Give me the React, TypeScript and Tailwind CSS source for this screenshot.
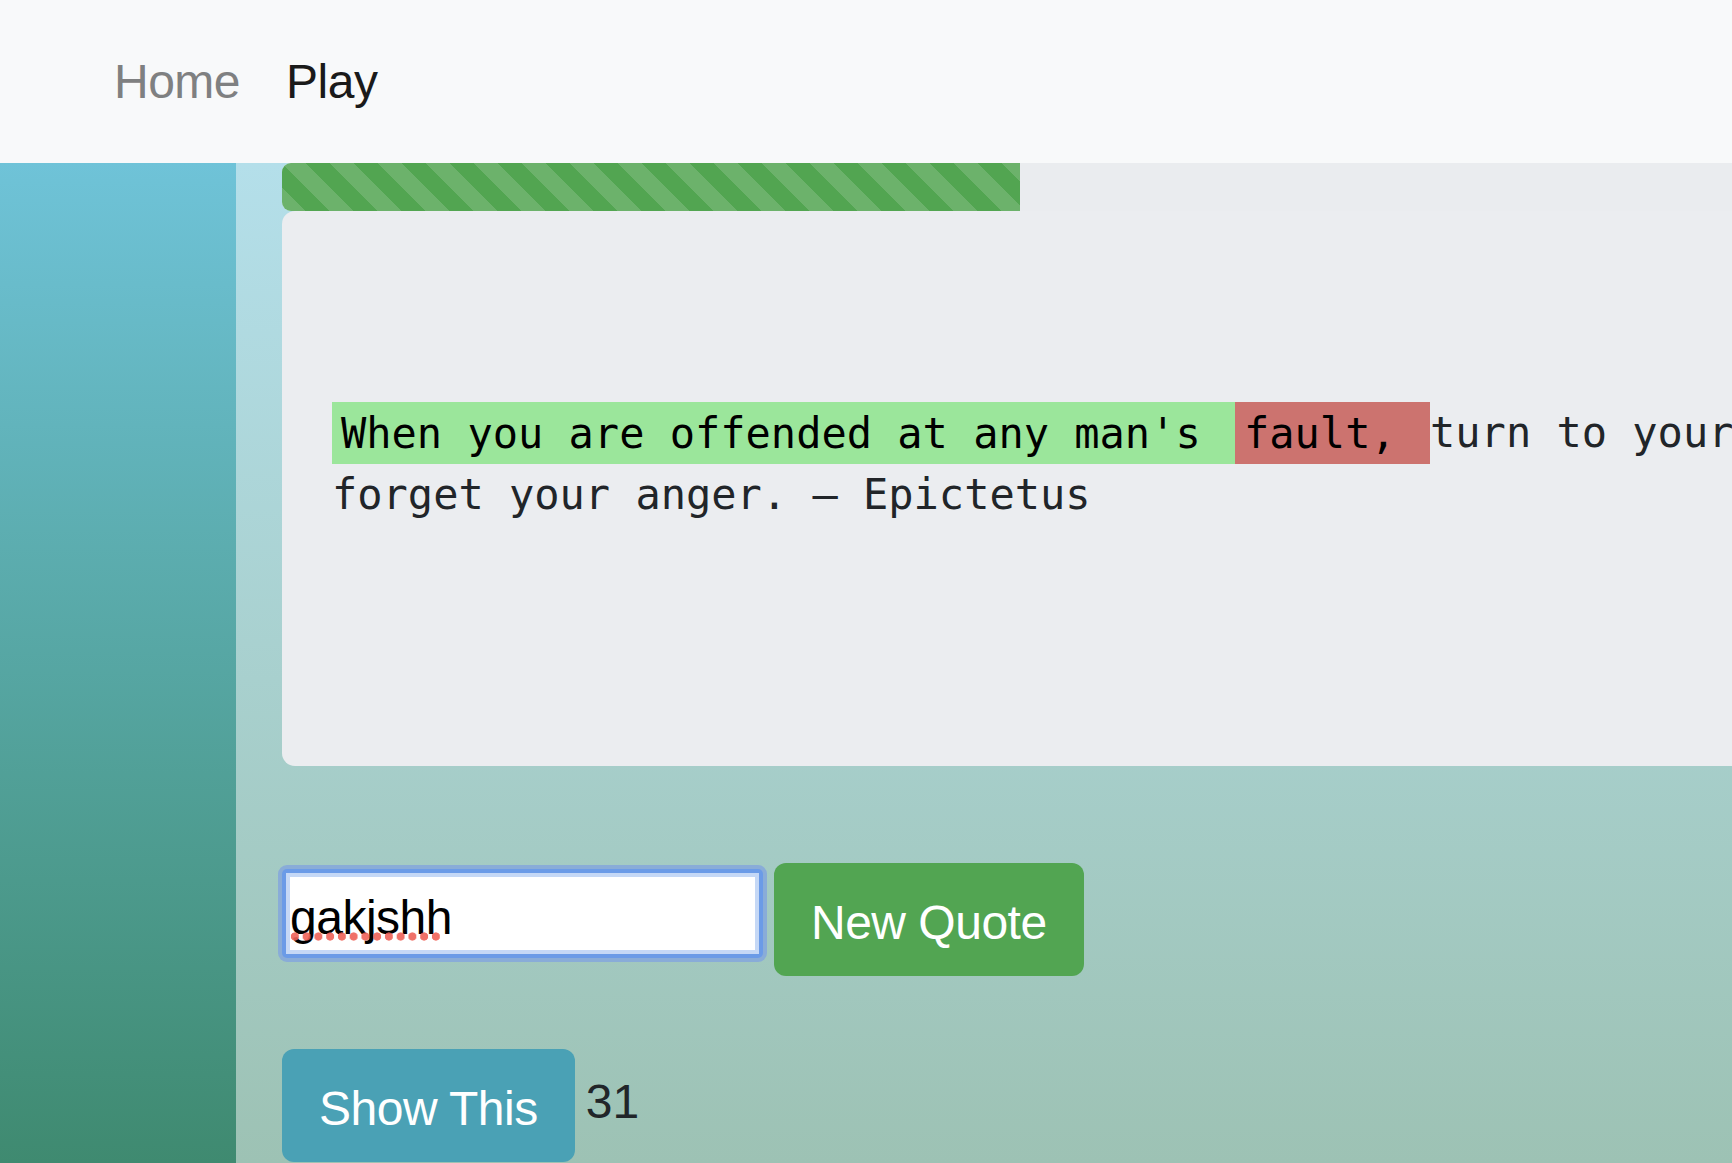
import React from "react";

export default function App() {
  return (
    <div className="w-[1732px] h-[1163px] overflow-hidden flex flex-col font-['Liberation_Sans',Arial,sans-serif]">
      <nav className="h-[163px] shrink-0 bg-[#f8f9fa] flex items-start pt-[46px] pl-[114px] gap-[46px] text-[48px] leading-[72px] tracking-[-0.5px]">
        <a className="text-[#7f8081]">Home</a>
        <a className="text-[#1a1a1a]">Play</a>
      </nav>
      <div className="flex-1 flex min-h-0">
        <aside className="w-[236px] shrink-0 bg-linear-to-b from-[#6fc3d8] to-[#3f8a70]" />
        <main className="flex-1 min-w-0 overflow-hidden bg-linear-to-b from-[#b4dfea] to-[#9dc2b4] pl-[46px]">
          <div className="w-[2700px] h-[48px] bg-[#eaecef] rounded-l-[9px] overflow-hidden flex">
            <div className="w-[738px] h-full bg-[#52a551] bg-[linear-gradient(45deg,rgba(255,255,255,.15)_25%,transparent_25%,transparent_50%,rgba(255,255,255,.15)_50%,rgba(255,255,255,.15)_75%,transparent_75%,transparent)] bg-[length:48px_48px]" />
          </div>
          <div className="w-[2700px] h-[555px] bg-[#ebedf0] rounded-[13px] pt-[191px] pl-[50px] font-['DejaVu_Sans_Mono',Menlo,monospace] text-[42px] leading-[62px] text-[#212529] whitespace-pre">
            <div>
              <span className="bg-[#9be69b] text-black px-[9px] py-[6.5px]">When you are offended at any man's </span>
              <span className="bg-[#cc736f] text-black px-[9px] py-[6.5px]">fault, </span>
              <span>turn to yourself and study your own failings. Then you will</span>
            </div>
            <div>forget your anger. – Epictetus</div>
          </div>
          <div className="mt-[97px] -ml-[4px] flex items-start gap-[7px]">
            <div className="mt-[2px] w-[489px] h-[97px] rounded-[9px] bg-[#89acd8] p-[4px]">
              <div className="rounded-[5px] bg-[#6b9be7] p-[4px]">
                <div className="bg-[#c5d8f6] p-[4px]">
                  <div className="relative h-[73px] bg-white">
                    <input
                      readOnly
                      value="gakjshh"
                      className="box-border block w-full h-[73px] pt-[7px] bg-white text-black text-[48px] tracking-[-0.5px] outline-none border-0 font-['Liberation_Sans',Arial,sans-serif]"
                    />
                    <span className="absolute -left-[1px] top-[55px] w-[153px] h-[9px] bg-[radial-gradient(circle,#ee6157_3.8px,transparent_4.4px)] bg-[length:11.75px_9px] opacity-90" />
                  </div>
                </div>
              </div>
            </div>
            <button className="h-[113px] px-[37px] pt-[24px] flex items-start leading-[72px] text-[48px] tracking-[-0.5px] text-white bg-[#52a552] rounded-[12px]">
              New Quote
            </button>
          </div>
          <div className="mt-[73px] flex items-start gap-[11px]">
            <button className="h-[113px] px-[37px] pt-[24px] flex items-start leading-[72px] text-[48px] tracking-[-0.5px] text-white bg-[#4aa1b5] rounded-[12px]">
              Show This
            </button>
            <span className="mt-[17px] leading-[72px] text-[48px] text-[#212529]">31</span>
          </div>
        </main>
      </div>
    </div>
  );
}
